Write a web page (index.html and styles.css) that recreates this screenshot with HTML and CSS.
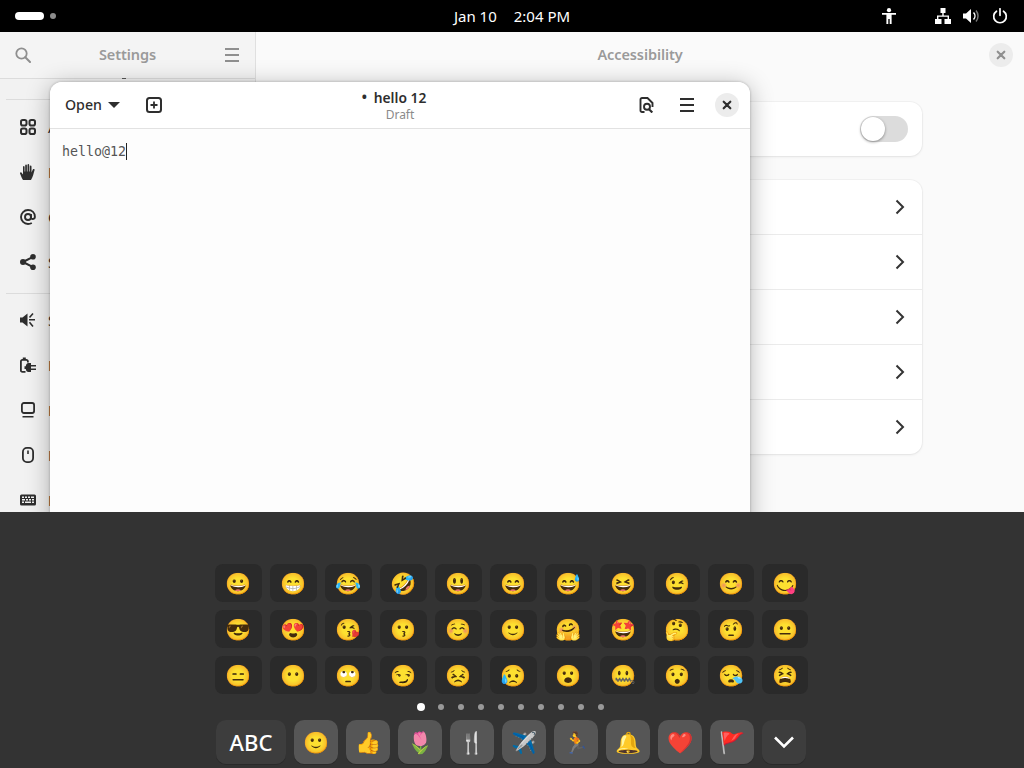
FILE: index.html
```html
<!DOCTYPE html>
<html lang="en">
<head>
<meta charset="utf-8">
<title>Accessibility</title>
<link rel="stylesheet" href="styles.css">
</head>
<body>
<svg class="defs" width="0" height="0" aria-hidden="true">
  <symbol id="i-menu" viewBox="0 0 16 16"><path d="M1 1.100h14v1.800H1zM1 7.100h14v1.800H1zM1 13.100h14v1.800H1z" fill="currentColor"/></symbol>
  <symbol id="i-close" viewBox="0 0 16 16"><path d="M4.700 4.700l6.600 6.600M11.300 4.700l-6.600 6.600" stroke="currentColor" stroke-width="2.200" fill="none" stroke-linecap="round"/></symbol>
  <symbol id="i-chev" viewBox="0 0 16 16"><path d="M4.500 1.500L11 8l-6.500 6.500" stroke="currentColor" stroke-width="2" fill="none"/></symbol>
</svg>

<header class="topbar">
  <div class="workspaces"><span class="ws-pill"></span><span class="ws-dot"></span></div>
  <div class="clock"><span>Jan 10</span><span>2:04 PM</span></div>
  <div class="tray">
    <svg class="tray-a11y" width="16" height="16" viewBox="0 0 16 16"><circle cx="8" cy="2.200" r="2.100" fill="#fff"/><path d="M1 5h14v1.800h-4.400V16H8.700v-5H7.300v5H5.400V6.800H1z" fill="#fff"/></svg>
    <svg class="tray-net" width="16" height="16" viewBox="0 0 16 16"><path d="M5.500 0h5v5h-5zM0 11h6.500v5H0zM9.500 11H16v5H9.500zM7.300 5h1.400v2.500H14V11h-1.400V8.800H3.400V11H2V7.500h5.300z" fill="#fff"/></svg>
    <svg class="tray-vol" width="16" height="16" viewBox="0 0 16 16"><path d="M0 5.500h3L8 1v14l-5-4.500H0z" fill="#fff"/><path d="M10.500 4.500a5 5 0 0 1 0 7" stroke="#fff" stroke-width="1.500" fill="none"/><path d="M13 2.500a8.500 8.500 0 0 1 0 11" stroke="#777" stroke-width="1.500" fill="none"/></svg>
    <svg class="tray-pow" width="16" height="16" viewBox="0 0 16 16"><path d="M4.500 3.200a6.300 6.300 0 1 0 7 0" stroke="#fff" stroke-width="1.700" fill="none" stroke-linecap="round"/><path d="M8 .8v6.500" stroke="#fff" stroke-width="1.700" stroke-linecap="round"/></svg>
  </div>
</header>

<main class="desk">
  <section class="settings">
    <aside class="sidebar">
      <div class="side-head">
        <svg class="ico-dim" width="16" height="16" viewBox="0 0 16 16"><circle cx="6.500" cy="6.500" r="5.200" stroke="currentColor" stroke-width="1.800" fill="none"/><path d="M10.300 10.300L15 15" stroke="currentColor" stroke-width="2" stroke-linecap="round"/></svg>
        <span class="dim-title">Settings</span>
        <svg class="ico-dim" width="16" height="16"><use href="#i-menu"/></svg>
        <span class="speck"></span>
      </div>
      <div class="peek"></div>
      <div class="side-sep"></div>
      <div class="side-group first">
        <div class="side-row">
          <svg width="16" height="16" viewBox="0 0 16 16"><g fill="none" stroke="currentColor" stroke-width="2"><rect x="1" y="1" width="5.500" height="5.500" rx="1.800"/><rect x="9.500" y="1" width="5.500" height="5.500" rx="1.800"/><rect x="1" y="9.500" width="5.500" height="5.500" rx="1.800"/><rect x="9.500" y="9.500" width="5.500" height="5.500" rx="1.800"/></g></svg>
          <span>Apps</span></div>
        <div class="side-row">
          <svg width="16" height="16" viewBox="0 0 16 16"><path d="M3 16c-1-1.500-2-4-3-6.500-.3-1 1-1.600 1.600-.7L3 10.500V3c0-1.200 1.600-1.200 1.600 0v4.500h.6V1.500c0-1.200 1.700-1.200 1.700 0v6h.6V1c0-1.300 1.700-1.300 1.700 0v6.500h.6V2.500c0-1.200 1.700-1.200 1.700 0v6c.5-1.200 1-2.500 1.500-3.200.7-.8 2-.2 1.600.8C13.700 9 13 13 11 16z" fill="currentColor"/></svg>
          <span>Privacy</span></div>
        <div class="side-row">
          <svg width="16" height="16" viewBox="0 0 16 16"><g fill="none" stroke="currentColor" stroke-width="1.900"><circle cx="8" cy="8" r="3"/><path d="M11 5v3.800c0 1.600 3.900 1.900 3.900-1C14.900 3.800 12 1 8 1a7 7 0 0 0 0 14c1.700 0 2.800-.4 3.800-1"/></g></svg>
          <span>Online Accounts</span></div>
        <div class="side-row">
          <svg width="16" height="16" viewBox="0 0 16 16"><g fill="currentColor"><circle cx="3" cy="8" r="3"/><circle cx="13" cy="2.800" r="2.800"/><circle cx="13" cy="13.200" r="2.800"/></g><path d="M3 8l10-5.200M3 8l10 5.200" stroke="currentColor" stroke-width="2"/></svg>
          <span>Sharing</span></div>
      </div>
      <div class="side-sep"></div>
      <div class="side-group">
        <div class="side-row">
          <svg width="16" height="16" viewBox="0 0 16 16"><path d="M0 5.500h2.500L7.500 1.500v13l-5-4H0z" fill="currentColor"/><path d="M9 7.800h6M9.500 5.500L13 1.500M9.500 10.200L13 14.500" stroke="currentColor" stroke-width="1.600" fill="none"/></svg>
          <span>Sound</span></div>
        <div class="side-row">
          <svg width="16" height="16" viewBox="0 0 16 16"><path d="M5.500 14.900H2.400A1.500 1.500 0 0 1 .9 13.400V4.400A1.500 1.500 0 0 1 2.400 2.900h4A1.500 1.500 0 0 1 7.900 4.400v1" stroke="currentColor" stroke-width="1.800" fill="none"/><path d="M2.800.4h3V3h-3zM8.500 6h2.500v2H16v1.600h-5v1.800h5V13h-5v2H8.500C6.800 15 6 13.700 5.800 12H4.500V9.300h1.300C6 7.300 6.800 6 8.500 6z" fill="currentColor"/></svg>
          <span>Power</span></div>
        <div class="side-row">
          <svg width="16" height="16" viewBox="0 0 16 16"><rect x="1.900" y="1" width="12.200" height="10" rx="2" stroke="currentColor" stroke-width="1.800" fill="none"/><path d="M2.500 14h11v1.500h-11z" fill="currentColor"/></svg>
          <span>Displays</span></div>
        <div class="side-row">
          <svg width="16" height="16" viewBox="0 0 16 16"><rect x="2.900" y=".9" width="10.200" height="14.200" rx="4" stroke="currentColor" stroke-width="1.800" fill="none"/><path d="M7.200 3.500h1.600v3.500H7.200z" fill="currentColor"/></svg>
          <span>Mouse &amp; Touchpad</span></div>
        <div class="side-row">
          <svg width="16" height="16" viewBox="0 0 16 16"><path fill-rule="evenodd" d="M1.500 2.500h13A1.500 1.500 0 0 1 16 4v8a1.500 1.500 0 0 1-1.500 1.500h-13A1.500 1.500 0 0 1 0 12V4a1.500 1.500 0 0 1 1.500-1.500zM2 4.500V6h2V4.500zM5 4.500V6h2V4.500zM8 4.500V6h2V4.500zM11 4.500V6h3V4.500zM2 7v1.500h3V7zM6 7v1.500h2V7zM9 7v1.500h2V7zM12 7v1.500h2V7zM2 9.500V11h2V9.500zM5 9.500V11h6V9.500zM12 9.500V11h2V9.500z" fill="currentColor"/></svg>
          <span>Keyboard</span></div>
      </div>
    </aside>

    <div class="panel">
      <div class="panel-head">
        <span class="dim-title">Accessibility</span>
        <button class="round-btn dim"><svg width="16" height="16"><use href="#i-close"/></svg></button>
      </div>
      <div class="cards">
        <div class="card switch-card"><span class="switch"><span class="knob"></span></span></div>
        <div class="card">
          <div class="card-row"><svg width="16" height="16"><use href="#i-chev"/></svg></div>
          <div class="card-row"><svg width="16" height="16"><use href="#i-chev"/></svg></div>
          <div class="card-row"><svg width="16" height="16"><use href="#i-chev"/></svg></div>
          <div class="card-row"><svg width="16" height="16"><use href="#i-chev"/></svg></div>
          <div class="card-row"><svg width="16" height="16"><use href="#i-chev"/></svg></div>
        </div>
      </div>
    </div>
  </section>

  <section class="editor">
    <div class="ed-head">
      <div class="ed-left">
        <button class="open-btn">Open<span class="caret"></span></button>
        <svg class="ed-new" width="18" height="18" viewBox="0 0 18 18"><rect x="2" y="2" width="14" height="14" rx="2.500" stroke="currentColor" stroke-width="2" fill="none"/><path d="M9 5.500v7M5.500 9h7" stroke="currentColor" stroke-width="1.800"/></svg>
      </div>
      <div class="ed-title">
        <div class="ed-name"><span class="bullet">•</span>hello 12</div>
        <div class="ed-sub">Draft</div>
      </div>
      <div class="ed-right">
        <svg width="16" height="16" viewBox="0 0 16 16"><path d="M5.500 15H3A1.500 1.500 0 0 1 1.500 13.500v-11A1.500 1.500 0 0 1 3 1h5.500l5 5v4" stroke="currentColor" stroke-width="1.900" fill="none"/><circle cx="8" cy="9.800" r="3" stroke="currentColor" stroke-width="1.900" fill="none"/><path d="M10 12.300L13.300 15.500" stroke="currentColor" stroke-width="2.200"/></svg>
        <svg width="16" height="16"><use href="#i-menu"/></svg>
        <button class="round-btn"><svg width="16" height="16"><use href="#i-close"/></svg></button>
      </div>
    </div>
    <div class="ed-body"><span class="ed-text">hello@12</span><span class="cursor"></span></div>
  </section>
</main>

<footer class="keyboard">
  <div class="emoji-grid">
    <span class="ekey">😀</span><span class="ekey">😁</span><span class="ekey">😂</span><span class="ekey">🤣</span><span class="ekey">😃</span><span class="ekey">😄</span><span class="ekey">😅</span><span class="ekey">😆</span><span class="ekey">😉</span><span class="ekey">😊</span><span class="ekey">😋</span>
    <span class="ekey">😎</span><span class="ekey">😍</span><span class="ekey">😘</span><span class="ekey">😗</span><span class="ekey">☺️</span><span class="ekey">🙂</span><span class="ekey">🤗</span><span class="ekey">🤩</span><span class="ekey">🤔</span><span class="ekey">🤨</span><span class="ekey">😐</span>
    <span class="ekey">😑</span><span class="ekey">😶</span><span class="ekey">🙄</span><span class="ekey">😏</span><span class="ekey">😣</span><span class="ekey">😥</span><span class="ekey">😮</span><span class="ekey">🤐</span><span class="ekey">😯</span><span class="ekey">😪</span><span class="ekey">😫</span>
  </div>
  <div class="pager">
    <span class="pdot on"></span><span class="pdot"></span><span class="pdot"></span><span class="pdot"></span><span class="pdot"></span><span class="pdot"></span><span class="pdot"></span><span class="pdot"></span><span class="pdot"></span><span class="pdot"></span>
  </div>
  <div class="cat-row">
    <span class="cat dark wide">ABC</span>
    <span class="cat">🙂</span><span class="cat">👍</span><span class="cat">🌷</span><span class="cat">🍴</span><span class="cat">✈️</span><span class="cat">🏃</span><span class="cat">🔔</span><span class="cat">❤️</span><span class="cat">🚩</span>
    <span class="cat dark"><svg width="24" height="24" viewBox="0 0 24 24"><path d="M3 7.500L12 16.500 21 7.500" stroke="#fff" stroke-width="2.600" fill="none"/></svg></span>
  </div>
</footer>
</body>
</html>
```
FILE: styles.css
```css
* { box-sizing: border-box; }
html, body { margin: 0; padding: 0; }
body {
  width: 1024px;
  height: 768px;
  overflow: hidden;
  display: flex;
  flex-direction: column;
  font-family: "Noto Sans", "Noto Color Emoji", sans-serif;
  color: #2e2e2e;
  background: #000;
}
.defs { position: absolute; }
button { font: inherit; color: inherit; border: 0; background: none; padding: 0; }
svg { display: block; flex: none; }

/* top bar */
.topbar {
  height: 32px;
  flex: none;
  background: #000;
  color: #fff;
  display: grid;
  grid-template-columns: 1fr auto 1fr;
  align-items: center;
  font-size: 15px;
}
.workspaces { display: flex; align-items: center; padding-left: 15px; gap: 6px; }
.ws-pill { width: 29px; height: 8px; border-radius: 4px; background: #fff; }
.ws-dot { width: 6px; height: 6px; border-radius: 50%; background: #8c8c8c; }
.clock { display: flex; gap: 17px; padding-bottom: 1px; }
.tray { display: flex; align-items: center; justify-content: flex-end; padding-right: 16px; }
.tray-a11y { margin-right: 38px; }
.tray-net { margin-right: 12px; }
.tray-vol { margin-right: 13px; }

/* desktop */
.desk { flex: 1; position: relative; overflow: hidden; min-height: 0; }
.settings { display: flex; height: 100%; background: #fafafa; }
.sidebar {
  width: 256px;
  flex: none;
  background: #f2f2f2;
  border-right: 1px solid #e0e0e0;
}
.side-head {
  position: relative;
  height: 47px;
  padding: 0 15px;
  display: flex;
  align-items: center;
  justify-content: space-between;
  background: #f4f4f4;
  border-bottom: 1px solid #dcdcdc;
}
.speck { position: absolute; left: 122px; bottom: -1px; width: 4px; height: 1px; background: #555; }
.ico-dim { color: #8f8f8f; }
.dim-title { font-size: 14.500px; font-weight: 600; color: #9a9a9a; letter-spacing: -.1px; padding-bottom: 2px; }
.peek { height: 20px; }
.side-sep { height: 1px; margin-left: 6px; background: #dcdcdc; }
.side-group { padding: 3px 0 9px; }
.side-group.first { padding-top: 4px; }
.side-row {
  height: 45px;
  display: flex;
  align-items: center;
  gap: 12px;
  padding-left: 20px;
  font-size: 15px;
  white-space: nowrap;
  overflow: hidden;
}
.panel { flex: 1; min-width: 0; }
.panel-head {
  position: relative;
  height: 46px;
  display: flex;
  align-items: center;
  justify-content: center;
}
.round-btn {
  width: 24px;
  height: 24px;
  border-radius: 50%;
  background: #ececec;
  display: flex;
  align-items: center;
  justify-content: center;
  color: #2e2e2e;
}
.round-btn.dim { position: absolute; right: 11px; top: 11px; color: #8f8f8f; }
.cards { width: 564px; margin: 24px auto 0; display: flex; flex-direction: column; gap: 24px; }
.card {
  background: #fff;
  border-radius: 12px;
  box-shadow: 0 0 0 1px rgba(0,0,0,.03), 0 1px 3px rgba(0,0,0,.07);
}
.switch-card { height: 54px; display: flex; align-items: center; justify-content: flex-end; padding-right: 14px; }
.switch { width: 48px; height: 26px; border-radius: 13px; background: #dcdcdc; display: flex; padding: 1px; }
.knob { width: 24px; height: 24px; border-radius: 50%; background: #fff; box-shadow: 0 1px 3px rgba(0,0,0,.4); }
.card-row {
  height: 55px;
  display: flex;
  align-items: center;
  justify-content: flex-end;
  padding-right: 14px;
  border-bottom: 1px solid #ebebeb;
  color: #333;
}
.card-row:last-child { border-bottom: 0; height: 54px; }

/* editor window */
.editor {
  position: absolute;
  left: 50px;
  top: 50px;
  width: 700px;
  height: 460px;
  border-radius: 12px 12px 0 0;
  background: #fdfdfd;
  box-shadow: 0 0 2px 1px rgba(0,0,0,.12), 0 4px 24px rgba(0,0,0,.3);
  overflow: hidden;
}
.ed-head {
  height: 47px;
  background: #fff;
  border-bottom: 1px solid #e2e2e2;
  display: grid;
  grid-template-columns: 1fr auto 1fr;
  align-items: center;
  padding: 0 11px;
}
.ed-left { display: flex; align-items: center; gap: 25px; padding-left: 4px; }
.open-btn { display: flex; align-items: center; gap: 6px; font-size: 14.200px; font-weight: 500; padding-bottom: 1px; }
.caret { width: 0; height: 0; border-left: 6px solid transparent; border-right: 6px solid transparent; border-top: 6px solid #2e2e2e; margin-top: 1px; }
.ed-title { text-align: center; line-height: 1; }
.ed-name { position: relative; font-size: 13.800px; font-weight: 600; line-height: 18px; padding-top: 1px; }
.bullet { position: absolute; left: -12px; top: 0; font-weight: 700; }
.ed-sub { font-size: 12px; color: #8a8a8a; line-height: 14px; margin-top: 1px; }
.ed-right { display: flex; align-items: center; justify-content: flex-end; gap: 24px; }
.ed-right .round-btn { margin-left: -4px; }
.ed-body {
  padding: 0 12px;
  display: flex;
  align-items: center;
  height: 44px;
}
.ed-text { font-family: "DejaVu Sans Mono", monospace; font-size: 13.300px; color: #555; }
.cursor { width: 1px; height: 17px; background: #222; }

/* on-screen keyboard */
.keyboard {
  height: 256px;
  flex: none;
  background: #333;
  position: relative;
  padding-top: 52px;
}
.emoji-grid {
  margin-left: 215px;
  display: grid;
  grid-template-columns: repeat(7, 47px) repeat(4, 46px);
  grid-auto-rows: 38px;
  gap: 8px;
}
.ekey {
  background: #2a2a2a;
  border-radius: 8px;
  display: flex;
  align-items: center;
  justify-content: center;
  font-size: 21px;
  line-height: 1;
}
.pager { display: flex; justify-content: center; align-items: center; gap: 14px; height: 26px; padding-right: 3px; }
.pdot { width: 6px; height: 6px; border-radius: 50%; background: #999; }
.pdot.on { background: #fff; width: 8px; height: 8px; margin: 0 -1px; }
.cat-row { display: flex; justify-content: center; gap: 8px; padding-right: 2px; }
.cat {
  width: 44px;
  height: 44px;
  border-radius: 10px;
  background: #565656;
  display: flex;
  align-items: center;
  justify-content: center;
  font-size: 21px;
  line-height: 1;
  box-shadow: 0 1px 0 #2a2a2a;
}
.cat.dark { background: #3d3d3d; }
.cat.wide { width: 70px; color: #fff; font-size: 22px; font-weight: 500; }
```
